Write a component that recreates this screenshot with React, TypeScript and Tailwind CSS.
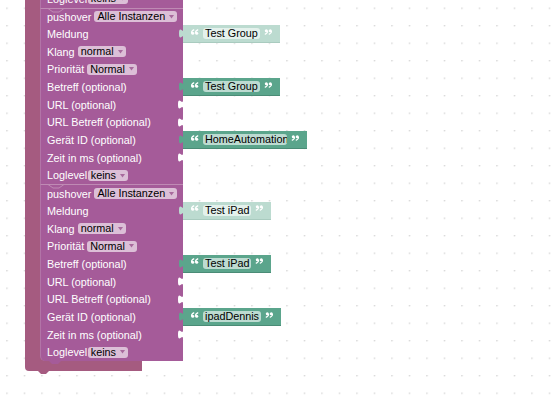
import React from 'react';

type Val = { text: string; light?: boolean; fieldW?: number };
type RowDef = {
  label: string;
  field?: string;
  tight?: boolean;
  value?: Val;
  empty?: boolean;
  sep?: boolean;
};

const makeBlock = (msg: string, betreff: string, geraet: Val): RowDef[] => [
  { label: 'pushover', field: 'Alle Instanzen', sep: true },
  { label: 'Meldung', value: { text: msg, light: true } },
  { label: 'Klang', field: 'normal' },
  { label: 'Priorität', field: 'Normal' },
  { label: 'Betreff (optional)', value: { text: betreff } },
  { label: 'URL (optional)', empty: true },
  { label: 'URL Betreff (optional)', empty: true },
  { label: 'Gerät ID (optional)', value: geraet },
  { label: 'Zeit in ms (optional)', empty: true },
  { label: 'Loglevel', field: 'keins', tight: true },
];

const rows: RowDef[] = [
  { label: 'Loglevel', field: 'keins', tight: true },
  ...makeBlock('Test Group', 'Test Group', { text: 'HomeAutomation', fieldW: 84 }),
  ...makeBlock('Test iPad', 'Test iPad', { text: 'ipadDennis' }),
];

function Tab({ color, className }: { color: string; className: string }) {
  return (
    <svg
      width="5"
      height="9"
      viewBox="-8 0 8 15"
      preserveAspectRatio="none"
      className={className}
      style={{ overflow: 'visible' }}
    >
      <path d="M0,0 C0,10 -8,-8 -8,7.5 S0,5 0,15 Z" fill={color} />
    </svg>
  );
}

function Dropdown({ text }: { text: string }) {
  return (
    <span className="flex h-[11px] shrink-0 items-center rounded-[3px] bg-[#dcbfd7] pl-[3px] pr-[3px] leading-[11px] text-black">
      <span>{text}</span>
      <svg width="5" height="4" viewBox="0 0 5 4" className="ml-[4px]">
        <path d="M0,0 L5,0 L2.5,3.5 Z" fill="#a86a9d" />
      </svg>
    </span>
  );
}

function OpenQuote() {
  return (
    <svg width="8" height="6" viewBox="0 0 8 6" className="-translate-y-[2px] shrink-0">
      <g fill="#ffffff" stroke="#ffffff">
        <circle cx="1.7" cy="4.2" r="1.5" stroke="none" />
        <path d="M3.2,0.6 C1.4,1.2 0.4,2.4 0.3,4.2" fill="none" strokeWidth="1.2" />
        <circle cx="5.7" cy="4.2" r="1.5" stroke="none" />
        <path d="M7.2,0.6 C5.4,1.2 4.4,2.4 4.3,4.2" fill="none" strokeWidth="1.2" />
      </g>
    </svg>
  );
}

function CloseQuote() {
  return (
    <svg width="8" height="6" viewBox="0 0 8 6" className="-translate-y-[2px] shrink-0">
      <g fill="#ffffff" stroke="#ffffff">
        <circle cx="2.3" cy="1.8" r="1.5" stroke="none" />
        <path d="M0.8,5.4 C2.6,4.8 3.6,3.6 3.7,1.8" fill="none" strokeWidth="1.2" />
        <circle cx="6.3" cy="1.8" r="1.5" stroke="none" />
        <path d="M4.8,5.4 C6.6,4.8 7.6,3.6 7.7,1.8" fill="none" strokeWidth="1.2" />
      </g>
    </svg>
  );
}

function TextBlock({ v }: { v: Val }) {
  const color = v.light ? '#bcdbd0' : '#5ba58c';
  const bg = v.light ? 'bg-[#bcdbd0] border-[#a9cbbf]' : 'bg-[#5ba58c] border-[#4a8c76]';
  const fieldBg = v.light ? 'bg-[#e4f1ec]' : 'bg-[#bddbd1]';
  return (
    <div className={`relative flex h-full items-center border-b pl-[8px] pr-[8px] ${bg}`}>
      <Tab color={color} className="absolute left-[-4.5px] top-[4px]" />
      <OpenQuote />
      <span
        className={`mx-[4px] h-[11px] overflow-hidden whitespace-nowrap rounded-[3px] px-[2px] text-[10.8px] leading-[11px] text-black ${fieldBg}`}
        style={v.fieldW ? { width: v.fieldW } : undefined}
      >
        {v.text}
      </span>
      <CloseQuote />
    </div>
  );
}

function Row({ r, last }: { r: RowDef; last: boolean }) {
  return (
    <div className="flex h-[17.7px] items-stretch">
      <div className={`w-[143px] shrink-0 ${last ? 'bg-[#a55b80]' : ''}`}>
        <div
          className={`relative flex h-full items-center whitespace-nowrap border-l border-[#b274a7] bg-[#a55b99] pl-[6px] text-[10.8px] text-white ${
            r.tight ? 'gap-[0.5px]' : 'gap-[3px]'
          } ${r.sep ? 'border-t border-t-[#bf8ab4]' : ''} ${last ? 'rounded-bl-[5px]' : ''}`}
        >
          {r.sep && (
            <svg width="16" height="5" viewBox="0 0 16 5" className="absolute left-[7px] top-[-1px]">
              <path d="M0,0.5 L5,4 L11,4 L16,0.5" fill="none" stroke="#bf8ab4" strokeWidth="1" />
            </svg>
          )}
          <span>{r.label}</span>
          {r.field && <Dropdown text={r.field} />}
          {r.empty && <Tab color="#ffffff" className="absolute right-0 top-[4px]" />}
        </div>
      </div>
      {r.value && <TextBlock v={r.value} />}
    </div>
  );
}

export default function App() {
  return (
    <div className="relative h-[399px] w-[551px] overflow-hidden bg-white font-['Liberation_Sans',Arial,sans-serif]">
      <svg className="absolute inset-0" width="551" height="399">
        <defs>
          <pattern id="dots" x="6.25" y="7.55" width="17.5" height="17.5" patternUnits="userSpaceOnUse">
            <circle cx="0.75" cy="0.75" r="0.75" fill="#c9c9c9" />
          </pattern>
        </defs>
        <rect width="551" height="399" fill="url(#dots)" />
      </svg>

      <div className="absolute left-[25px] top-[-10.2px] flex flex-col">
        <div className="flex">
          <div className="w-[15px] shrink-0 bg-[#a55b80]" />
          <div className="flex flex-col">
            {rows.map((r, i) => (
              <Row key={i} r={r} last={i === rows.length - 1} />
            ))}
          </div>
        </div>
        <div className="relative h-[10px] w-[116.5px] rounded-bl-[4px] bg-[#a55b80]">
          <svg width="12" height="3" viewBox="0 0 12 3" className="absolute left-[24px] top-0">
            <path d="M0,0 L3,3 L9,3 L12,0 Z" fill="#a55b99" />
          </svg>
          <svg width="11" height="3" viewBox="0 0 11 3" className="absolute left-[13px] top-full">
            <path d="M0,0 L3,3 L8,3 L11,0 Z" fill="#a55b80" />
          </svg>
        </div>
      </div>
    </div>
  );
}
